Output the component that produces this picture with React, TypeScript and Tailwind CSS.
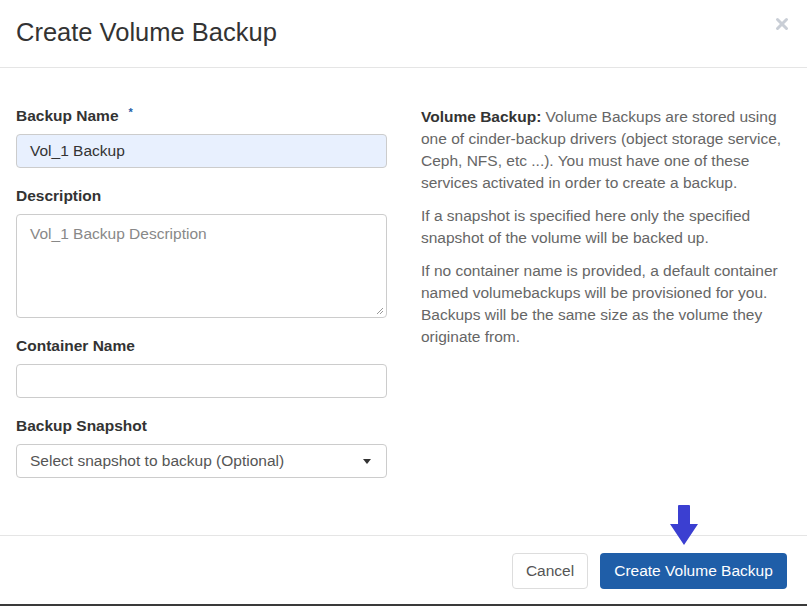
import { X } from 'lucide-react';

const Field = ({ label, required, children }: { label: string; required?: boolean; children: React.ReactNode }) => (
    <div className="mb-[18px]">
        <div className="flex items-start text-[15.5px] font-bold text-[#333] leading-[20px] mb-[8px]">
            {label}
            {required && <span className="ml-[10px] text-[11px] text-[#1f5ea8] leading-[10px] mt-[1px]">*</span>}
        </div>
        {children}
    </div>
);

const App = () => {
    return (
        <div className="relative w-[807px] h-[608px] bg-white overflow-hidden text-[#333]" style={{ fontFamily: '"Liberation Sans", Arial, sans-serif' }}>
            {/* Header */}
            <div className="h-[68px] border-b border-[#e5e5e5] flex items-center justify-between pl-[16px] pr-[16px]">
                <h1 className="text-[25.5px] font-normal text-[#333] pb-[2px]">Create Volume Backup</h1>
                <X size={18} strokeWidth={4} className="text-[#c9ced6] mb-[20px]" />
            </div>

            {/* Body */}
            <div className="flex h-[467px] pt-[38px] px-[16px]">
                <div className="w-[371px] shrink-0">
                    <Field label="Backup Name" required>
                        <div className="h-[34px] rounded-[4px] border border-[#ccc] bg-[#e8f0fe] flex items-center px-[13px] text-[15.5px] text-[#333]">
                            Vol_1 Backup
                        </div>
                    </Field>
                    <Field label="Description">
                        <div className="relative h-[104px] rounded-[4px] border border-[#ccc] px-[13px] pt-[7px] text-[15.5px] text-[#888]">
                            Vol_1 Backup Description
                            <svg className="absolute right-[2px] bottom-[2px]" width="9" height="9" viewBox="0 0 9 9">
                                <path d="M8 2 L2 8 M8 5 L5 8" stroke="#999" strokeWidth="1" />
                            </svg>
                        </div>
                    </Field>
                    <Field label="Container Name">
                        <div className="h-[34px] rounded-[4px] border border-[#ccc] bg-white" />
                    </Field>
                    <Field label="Backup Snapshot">
                        <div className="h-[34px] rounded-[4px] border border-[#ccc] bg-white flex items-center justify-between px-[13px] text-[15.5px] text-[#555]">
                            <span>Select snapshot to backup (Optional)</span>
                            <span className="w-0 h-0 border-l-[4px] border-r-[4px] border-t-[5px] border-l-transparent border-r-transparent border-t-[#333] mr-[2px]" />
                        </div>
                    </Field>
                </div>
                <div className="ml-[34px] w-[372px] text-[15.5px] leading-[22px] text-[#666]">
                    <p className="mb-[11px]">
                        <span className="font-bold text-[#333]">Volume Backup:</span> Volume Backups are stored using one of cinder-backup drivers (object storage service, Ceph, NFS, etc ...). You must have one of these services activated in order to create a backup.
                    </p>
                    <p className="mb-[11px]">If a snapshot is specified here only the specified snapshot of the volume will be backed up.</p>
                    <p>If no container name is provided, a default container named volumebackups will be provisioned for you. Backups will be the same size as the volume they originate from.</p>
                </div>
            </div>

            {/* Footer */}
            <div className="h-[69px] border-t border-[#e5e5e5] flex items-center justify-end gap-[12px] pr-[20px] pt-[2px]">
                <button className="h-[36px] w-[76px] rounded-[4px] border border-[#ddd] bg-white text-[15.5px] text-[#555]">Cancel</button>
                <button className="h-[36px] w-[187px] rounded-[4px] bg-[#1f5ea8] text-[15.5px] text-white">Create Volume Backup</button>
            </div>
            <div className="h-[2px] bg-[#3a3a3a]" />

            {/* Arrow annotation */}
            <svg className="absolute left-[669px] top-[504px]" width="30" height="42" viewBox="0 0 30 42">
                <path d="M9 2 Q9 1 10 1 L20 1 Q21 1 21 2 L21 20 L29 20 L15 41 L1 20 L9 20 Z" fill="#3b3fd1" />
            </svg>
        </div>
    );
};

export default App;
